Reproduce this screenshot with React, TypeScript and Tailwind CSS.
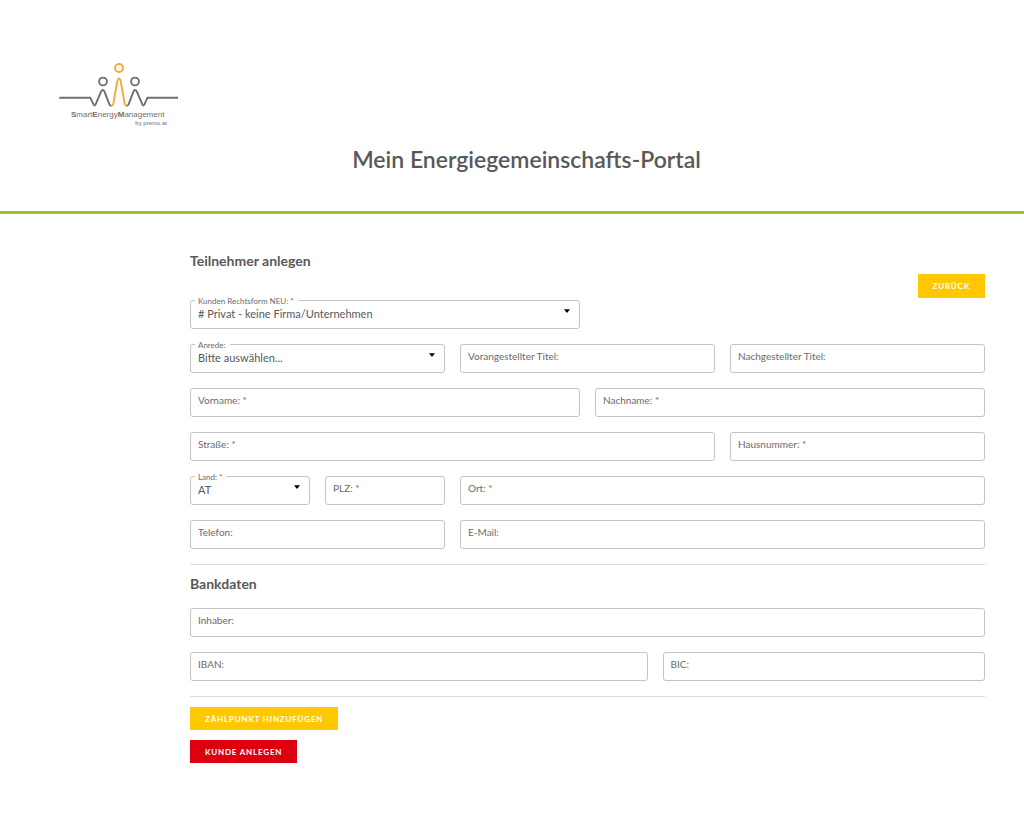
import React, { useState } from "react";

interface FieldProps {
  id: string;
  label: string;
  required?: boolean;
  className?: string;
}

interface SelectFieldProps extends FieldProps {
  options: string[];
}

const InputField = ({ id, label, required, className }: FieldProps) => {
  return (
    <div className={`relative ${className}`}>
      <input id={id} name={id} type="text" placeholder=" " required={required} className="peer block h-[29px] w-full rounded-[3px] border border-[#c4c4c4] bg-white px-[7px] text-[11px] text-[#58585a] outline-none focus:border-[#97c71e]" />
      <label htmlFor={id} className="pointer-events-none absolute -top-1 left-[6px] bg-white px-[2px] text-[8px] leading-[10px] text-[#6b6b6b] peer-placeholder-shown:top-1 peer-placeholder-shown:text-[10px] peer-placeholder-shown:leading-4">
        {label}
        {required && " *"}
      </label>
    </div>
  );
};

const SelectField = ({ id, label, required, className, options }: SelectFieldProps) => {
  const [value, setValue] = useState<string>(options[0]);

  return (
    <div className={`relative ${className}`}>
      <select id={id} name={id} value={value} required={required} onChange={(e) => setValue(e.target.value)} className="block h-[29px] w-full appearance-none rounded-[3px] border border-[#c4c4c4] bg-white pr-6 pl-[7px] text-[11px] text-[#58585a] outline-none focus:border-[#97c71e]">
        {options.map((option) => (
          <option key={option} value={option}>
            {option}
          </option>
        ))}
      </select>
      <label htmlFor={id} className="pointer-events-none absolute -top-1 left-[5px] bg-white pr-1 pl-[3px] text-[8px] leading-[10px] text-[#6b6b6b]">
        {label}
        {required && " *"}
      </label>
      <svg viewBox="0 0 6 4" className="pointer-events-none absolute top-[9px] right-[10px] h-1 w-[6px]" aria-hidden="true">
        <path d="M0 0.3h6L3.4 3.6q-.4.4-.8 0z" fill="#000" />
      </svg>
    </div>
  );
};

const Logo = () => {
  return (
    <svg viewBox="0 0 120 66" className="h-[66px] w-[120px]" role="img" aria-label="SmartEnergyManagement">
      <g fill="none" stroke="#6f6f6e" strokeWidth="1.9" strokeLinejoin="round">
        <circle cx="44" cy="19.5" r="3.9" />
        <circle cx="76" cy="19.5" r="3.9" />
        <path d="M.3 35.8H31.4L34.6 42.6Q35.6 44.4 36.6 42.4L42 29.6Q43.8 26.4 45.5 29.6L50.4 42.4Q51.4 44.2 52.6 43.2" />
        <path d="M67.4 43.2Q68.6 44.2 69.6 42.4L74.4 29.6Q76.1 26.4 77.9 29.6L83.3 42.4Q84.3 44.4 85.3 42.6L88.4 35.8H119" />
        <g stroke="#f6a83c">
          <circle cx="60" cy="6" r="4" />
          <path d="M52 43.6Q53.7 44 54.4 41.4L58.2 19.6Q60 13.2 61.8 19.6L65.6 41.4Q66.3 44 68 43.6" />
        </g>
      </g>
      <g fill="#6f6f6e" fontFamily="'Liberation Sans', sans-serif">
        <text x="12" y="55" fontSize="8">
          <tspan fontWeight="bold">S</tspan>mart<tspan fontWeight="bold">E</tspan>nergy<tspan fontWeight="bold">M</tspan>anagement
        </text>
        <text x="108" y="63" fontSize="6" textAnchor="end">
          by premo.at
        </text>
      </g>
    </svg>
  );
};

const App = () => {
  const handleSubmit = (e: React.FormEvent) => {
    e.preventDefault();
  };

  return (
    <div className="min-h-screen bg-white pb-12 font-['Lato',sans-serif] text-[#58585a]">
      <header className="border-b-[3px] border-[#97c71e] pt-[62px] pr-[30px] pb-[34px] pl-[59px]">
        <Logo />
        <h1 className="mt-[14px] text-center text-[23px] leading-[35px] font-semibold">Mein Energiegemeinschafts-Portal</h1>
      </header>

      <main className="pt-[37px] pr-[39px] pl-[190px]">
        <h2 className="text-sm leading-5 font-bold">Teilnehmer anlegen</h2>
        <div className="mt-[3px] flex justify-end">
          <button type="button" className="h-6 bg-[#ffc800] px-[15px] text-[8px] font-bold tracking-widest text-white">
            ZURÜCK
          </button>
        </div>

        <form onSubmit={handleSubmit} className="mt-[2px]">
          <div className="grid grid-cols-12 gap-[15px]">
            <SelectField id="rechtsform" label="Kunden Rechtsform NEU:" required options={["# Privat - keine Firma/Unternehmen"]} className="col-span-6" />
            <SelectField id="anrede" label="Anrede:" options={["Bitte auswählen...", "Frau", "Herr"]} className="col-span-4 col-start-1" />
            <InputField id="titelVor" label="Vorangestellter Titel:" className="col-span-4" />
            <InputField id="titelNach" label="Nachgestellter Titel:" className="col-span-4" />
            <InputField id="vorname" label="Vorname:" required className="col-span-6" />
            <InputField id="nachname" label="Nachname:" required className="col-span-6" />
            <InputField id="strasse" label="Straße:" required className="col-span-8" />
            <InputField id="hausnummer" label="Hausnummer:" required className="col-span-4" />
            <SelectField id="land" label="Land:" required options={["AT", "DE", "CH"]} className="col-span-2" />
            <InputField id="plz" label="PLZ:" required className="col-span-2" />
            <InputField id="ort" label="Ort:" required className="col-span-8" />
            <InputField id="telefon" label="Telefon:" className="col-span-4" />
            <InputField id="email" label="E-Mail:" className="col-span-8" />
          </div>

          <hr className="mt-[15px] border-[#dedede]" />
          <h2 className="mt-[9px] mb-[14px] text-sm leading-5 font-bold">Bankdaten</h2>

          <div className="grid grid-cols-12 gap-[15px]">
            <InputField id="inhaber" label="Inhaber:" className="col-span-12" />
            <InputField id="iban" label="IBAN:" className="col-span-7" />
            <InputField id="bic" label="BIC:" className="col-span-5" />
          </div>

          <hr className="mt-[15px] border-[#dedede]" />
          <div className="mt-[10px] flex flex-col items-start gap-[10px]">
            <button type="button" className="h-[23px] bg-[#ffc800] px-[15px] text-[8px] font-bold tracking-widest text-white">
              ZÄHLPUNKT HINZUFÜGEN
            </button>
            <button type="submit" className="h-[23px] bg-[#dc000f] px-[15px] text-[8px] font-bold tracking-widest text-white">
              KUNDE ANLEGEN
            </button>
          </div>
        </form>
      </main>
    </div>
  );
};

export default App;
